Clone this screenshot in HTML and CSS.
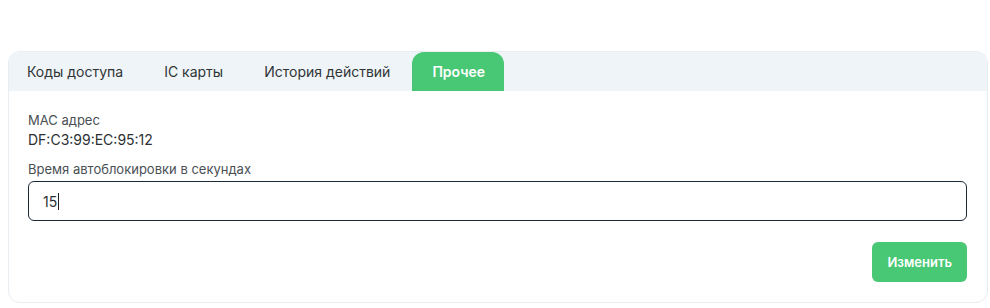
FILE: index.html
```html
<!DOCTYPE html>
<html lang="ru">
<head>
    <meta charset="UTF-8">
    <meta name="viewport" content="width=device-width, initial-scale=1.0">
    <title>Настройки замка</title>
    <link rel="stylesheet" href="styles.css">
</head>
<body>
    <div class="card">
        <div class="tabs">
            <div class="tab tab-first">Коды доступа</div>
            <div class="tab">IC карты</div>
            <div class="tab">История действий</div>
            <div class="tab active">Прочее</div>
        </div>
        <div class="card-body">
            <div class="label">МАС адрес</div>
            <div class="value">DF:C3:99:EC:95:12</div>
            <div class="label label-field">Время автоблокировки в секундах</div>
            <div class="input-box">15<span class="caret"></span></div>
            <div class="actions">
                <button class="btn">Изменить</button>
            </div>
        </div>
    </div>
</body>
</html>
```

FILE: styles.css
```css
body{
    margin:0;
    padding:51px 2px 0 8px;
    background:#fff;
    font-family:Inter, "Noto Sans", sans-serif;
    color:#2b2f33;
}

.card{
    border:1px solid #e8edf1;
    border-radius:12px;
    overflow:hidden;
    background:#fff;
}

.tabs{
    display:flex;
    height:39px;
    background:#eff4f8;
}

.tab{
    display:flex;
    align-items:center;
    padding:0 20px 0 21px;
    font-size:14px;
    color:#2f3437;
}

.tab-first{
    padding-left:18px;
}

.tab.active{
    margin-left:2px;
    padding:0 19px 0 20px;
    background:#48c774;
    color:#fff;
    font-weight:600;
    border-radius:12px 12px 0 0;
}

.card-body{
    padding:20px 20px 20px 19px;
}

.label{
    font-size:13px;
    line-height:18px;
    color:#4a4f54;
}

.value{
    margin-top:1px;
    font-size:14px;
    line-height:20px;
    color:#2b2f33;
}

.label-field{
    margin-top:10px;
}

.input-box{
    margin-top:3px;
    height:40px;
    box-sizing:border-box;
    border:1px solid #1c2a38;
    border-radius:6px;
    padding:0 14px;
    display:flex;
    align-items:center;
    font-size:14px;
    color:#2b2f33;
}

.caret{
    display:inline-block;
    width:1px;
    height:17px;
    margin-left:1px;
    background:#222;
}

.actions{
    display:flex;
    justify-content:flex-end;
    margin-top:21px;
}

.btn{
    height:40px;
    padding:0 15px;
    border:none;
    border-radius:6px;
    background:#48c774;
    color:#fff;
    font-family:Inter, "Noto Sans", sans-serif;
    font-size:13px;
    font-weight:600;
}
```
